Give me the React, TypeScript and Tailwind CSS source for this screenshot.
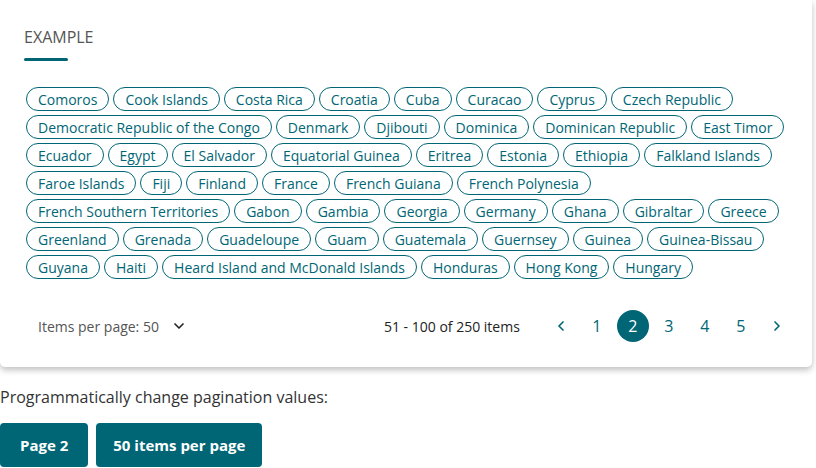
import { ChevronDown, ChevronLeft, ChevronRight } from "lucide-react"

const countries = [
  "Comoros", "Cook Islands", "Costa Rica", "Croatia", "Cuba", "Curacao", "Cyprus", "Czech Republic",
  "Democratic Republic of the Congo", "Denmark", "Djibouti", "Dominica", "Dominican Republic", "East Timor",
  "Ecuador", "Egypt", "El Salvador", "Equatorial Guinea", "Eritrea", "Estonia", "Ethiopia", "Falkland Islands",
  "Faroe Islands", "Fiji", "Finland", "France", "French Guiana", "French Polynesia",
  "French Southern Territories", "Gabon", "Gambia", "Georgia", "Germany", "Ghana", "Gibraltar", "Greece",
  "Greenland", "Grenada", "Guadeloupe", "Guam", "Guatemala", "Guernsey", "Guinea", "Guinea-Bissau",
  "Guyana", "Haiti", "Heard Island and McDonald Islands", "Honduras", "Hong Kong", "Hungary",
]

// rows as laid out in the picture
const rows = [8, 6, 8, 6, 8, 8, 6]

export default function App() {
  let start = 0
  const chipRows = rows.map((n) => {
    const r = countries.slice(start, start + n)
    start += n
    return r
  })

  return (
    <div className="w-[816px] h-[468px] overflow-hidden bg-white" style={{ fontFamily: "'Open Sans', sans-serif" }}>
      {/* Card */}
      <div className="w-[812px] bg-white rounded-b-[5px] shadow-[0_3px_6px_rgba(0,0,0,0.25)] pl-[24px] pr-[16px] pt-[27px] pb-[25px]">
        <div className="text-[16px] leading-[20px] text-[#555] uppercase">Example</div>
        <div className="mt-[11px] w-[44px] h-[3px] rounded-full bg-[#006675]" />

        <div className="mt-[26px] ml-[2px] flex flex-col gap-[4px]">
          {chipRows.map((row, i) => (
            <div key={i} className="flex gap-[4px]">
              {row.map((c) => (
                <span
                  key={c}
                  className="h-[24px] px-[11px] flex items-center rounded-full border border-[#006675] text-[14px] text-[#006675] whitespace-nowrap"
                >
                  {c}
                </span>
              ))}
            </div>
          ))}
        </div>

        {/* Pager */}
        <div className="mt-[31px] flex items-center h-[32px] whitespace-nowrap">
          <div className="ml-[14px] shrink-0 flex items-center text-[14px] text-[#555]">
            Items per page: 50
            <ChevronDown className="ml-[12px] w-[16px] h-[16px] text-[#222]" strokeWidth={2.5} />
          </div>
          <div className="ml-[197px] shrink-0 text-[14px] text-[#222]">51 - 100 of 250 items</div>
          <div className="ml-[23px] shrink-0 flex items-center text-[16px] text-[#006675]">
            <span className="w-[36px] h-[32px] flex items-center justify-center">
              <ChevronLeft className="w-[16px] h-[16px]" strokeWidth={2.5} />
            </span>
            <span className="w-[36px] h-[32px] flex items-center justify-center">1</span>
            <span className="w-[36px] h-[32px] flex items-center justify-center">
              <span className="w-[32px] h-[32px] rounded-full bg-[#006675] text-white flex items-center justify-center">2</span>
            </span>
            <span className="w-[36px] h-[32px] flex items-center justify-center">3</span>
            <span className="w-[36px] h-[32px] flex items-center justify-center">4</span>
            <span className="w-[36px] h-[32px] flex items-center justify-center">5</span>
            <span className="w-[36px] h-[32px] flex items-center justify-center">
              <ChevronRight className="w-[16px] h-[16px]" strokeWidth={2.5} />
            </span>
          </div>
        </div>
      </div>

      <p className="mt-[20px] text-[16px] leading-[20px] text-[#333]">Programmatically change pagination values:</p>
      <div className="mt-[16px] flex gap-[8px]">
        <button className="h-[44px] px-[20px] rounded-[4px] bg-[#006675] text-white text-[15px] font-bold">Page 2</button>
        <button className="h-[44px] px-[17px] rounded-[4px] bg-[#006675] text-white text-[15px] font-bold">50 items per page</button>
      </div>
    </div>
  )
}
